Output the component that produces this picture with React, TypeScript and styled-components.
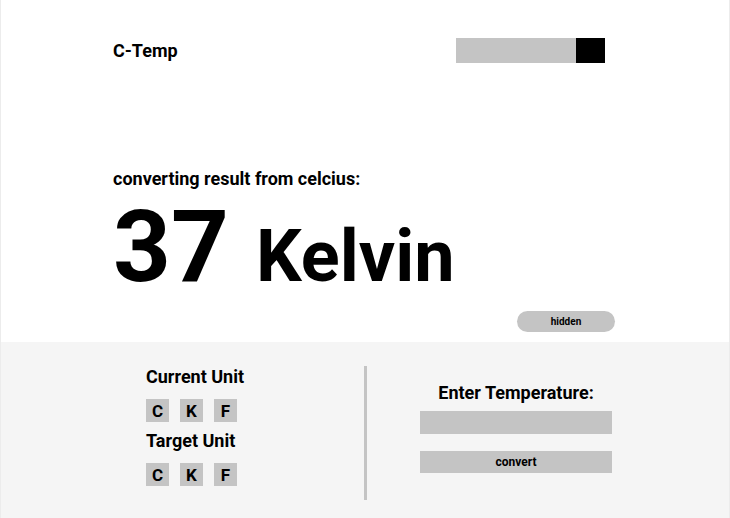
import React from "react";
import styled, { createGlobalStyle } from "styled-components";

const Global = createGlobalStyle`
  html, body { margin: 0; padding: 0; background: #ffffff; }
  body { font-family: Roboto, "Liberation Sans", Arial, sans-serif; color: #000; }
  * { box-sizing: border-box; }
`;

const Page = styled.div`
  width: 730px;
  height: 518px;
  border-left: 1px solid #ececec;
  border-right: 1px solid #ececec;
  display: flex;
  flex-direction: column;
  overflow: hidden;
`;

const Top = styled.section`
  height: 342px;
  padding: 38px 124px 0 112px;
  display: flex;
  flex-direction: column;
  background: #fff;
`;

const Header = styled.header`
  display: flex;
  justify-content: space-between;
  align-items: center;
  height: 25px;
`;

const Logo = styled.div`
  font-size: 18px;
  font-weight: 700;
  line-height: 25px;
`;

const Search = styled.div`
  display: flex;
  height: 25px;
`;

const SearchField = styled.div`
  width: 120px;
  background: #c4c4c4;
`;

const SearchButton = styled.div`
  width: 29px;
  background: #000;
`;

const Caption = styled.div`
  margin-top: 105px;
  font-size: 18px;
  font-weight: 700;
  line-height: 21px;
`;

const Result = styled.div`
  display: flex;
  align-items: baseline;
  gap: 27px;
  margin-top: 4px;
  line-height: 108px;
`;

const Value = styled.span`
  font-size: 101px;
  font-weight: 700;
`;

const Unit = styled.span`
  font-size: 72px;
  font-weight: 700;
`;

const HiddenRow = styled.div`
  display: flex;
  justify-content: flex-end;
  margin-right: -10px;
`;

const Pill = styled.button`
  width: 98px;
  height: 21px;
  border: none;
  border-radius: 11px;
  background: #c4c4c4;
  font-family: inherit;
  font-size: 10px;
  font-weight: 700;
  color: #000;
  padding: 0;
`;

const Bottom = styled.section`
  flex: 1;
  background: #f5f5f5;
  display: flex;
  padding: 24px 0 18px 145px;
`;

const LeftCol = styled.div`
  width: 218px;
  display: flex;
  flex-direction: column;
`;

const Label = styled.div`
  font-size: 18px;
  font-weight: 700;
  line-height: 21px;
`;

const Units = styled.div<{ $mb: number }>`
  display: flex;
  gap: 11px;
  margin-top: 12px;
  margin-bottom: ${(p) => p.$mb}px;
`;

const UnitBtn = styled.div`
  width: 23px;
  height: 23px;
  background: #c4c4c4;
  display: flex;
  align-items: center;
  justify-content: center;
  font-size: 17px;
  font-weight: 700;
`;

const Divider = styled.div`
  width: 3px;
  background: #c4c4c4;
`;

const RightCol = styled.div`
  padding-left: 53px;
  display: flex;
  flex-direction: column;
  width: 245px;
`;

const RightLabel = styled(Label)`
  text-align: center;
  margin-top: 16px;
`;

const Field = styled.div`
  height: 23px;
  background: #c4c4c4;
  margin-top: 8px;
`;

const Convert = styled.button`
  height: 22px;
  background: #c4c4c4;
  border: none;
  margin-top: 17px;
  font-family: inherit;
  font-size: 12px;
  font-weight: 700;
  color: #000;
  padding: 0;
`;

export default function App() {
  return (
    <>
      <Global />
      <Page>
        <Top>
          <Header>
            <Logo>C-Temp</Logo>
            <Search>
              <SearchField />
              <SearchButton />
            </Search>
          </Header>
          <Caption>converting result from celcius:</Caption>
          <Result>
            <Value>37</Value>
            <Unit>Kelvin</Unit>
          </Result>
          <HiddenRow>
            <Pill>hidden</Pill>
          </HiddenRow>
        </Top>
        <Bottom>
          <LeftCol>
            <Label>Current Unit</Label>
            <Units $mb={8}>
              <UnitBtn>C</UnitBtn>
              <UnitBtn>K</UnitBtn>
              <UnitBtn>F</UnitBtn>
            </Units>
            <Label>Target Unit</Label>
            <Units $mb={0}>
              <UnitBtn>C</UnitBtn>
              <UnitBtn>K</UnitBtn>
              <UnitBtn>F</UnitBtn>
            </Units>
          </LeftCol>
          <Divider />
          <RightCol>
            <RightLabel>Enter Temperature:</RightLabel>
            <Field />
            <Convert>convert</Convert>
          </RightCol>
        </Bottom>
      </Page>
    </>
  );
}
